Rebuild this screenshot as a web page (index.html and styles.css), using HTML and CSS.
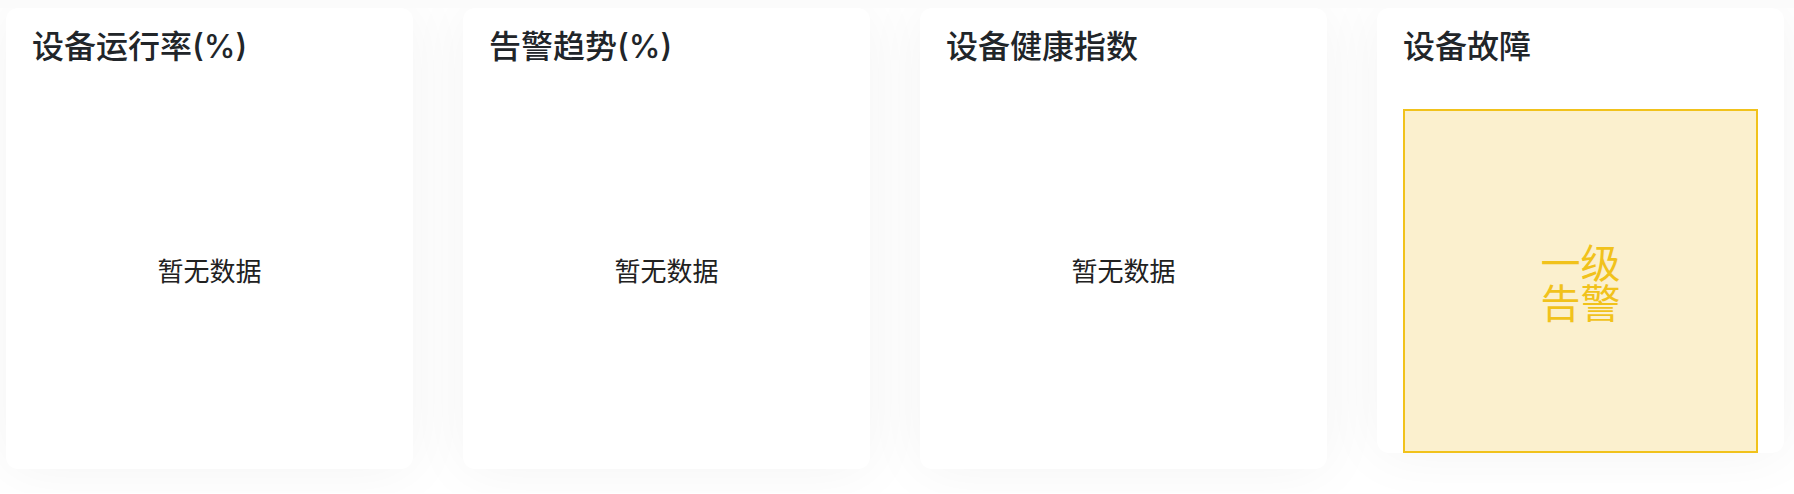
FILE: index.html
```html
<!DOCTYPE html>
<html lang="zh-CN">
<head>
<meta charset="utf-8">
<title>设备概览</title>
<link rel="stylesheet" href="styles.css">
</head>
<body>
<main class="board">
  <section class="card">
    <h2 class="title">设备运行率(%)</h2>
    <p class="empty">暂无数据</p>
  </section>
  <section class="card">
    <h2 class="title">告警趋势(%)</h2>
    <p class="empty">暂无数据</p>
  </section>
  <section class="card">
    <h2 class="title">设备健康指数</h2>
    <p class="empty">暂无数据</p>
  </section>
  <section class="card card-fault">
    <h2 class="title">设备故障</h2>
    <div class="level"><span class="level-name">一级<br>告警</span></div>
  </section>
</main>
</body>
</html>
```

FILE: styles.css
```css
body {
  margin: 0;
  background: #fff;
  font-family: "Noto Sans CJK SC", sans-serif;
  color: #212529;
}
.board {
  display: grid;
  grid-template-columns: repeat(4, 1fr);
  gap: 50px;
  align-items: start;
  padding: 0 10px 24px 6px;
  border-top: 8px solid #fbfbfb;
  overflow: hidden;
}
.card {
  display: flex;
  flex-direction: column;
  box-sizing: border-box;
  min-height: 461px;
  padding: 16px 26px 0;
  border-radius: 12px;
  background: #fff;
  box-shadow: 0 0 60px rgba(0, 0, 20, 0.05);
}
.card-fault {
  min-height: 0;
}
.title {
  margin: 0;
  font-family: Inter, "Noto Sans CJK SC", sans-serif;
  font-size: 32px;
  line-height: 46px;
  font-weight: 500;
}
.empty {
  display: grid;
  flex: 1;
  place-items: center;
  margin: 0;
  font-size: 26px;
  color: #212121;
}
.level {
  display: grid;
  place-items: center;
  box-sizing: border-box;
  height: 344px;
  margin-top: 39px;
  border: 2px solid #f1c21b;
  background: #fbf0ce;
  color: #f1c21b;
}
.level-name {
  font-size: 40px;
  line-height: 40px;
}
```
